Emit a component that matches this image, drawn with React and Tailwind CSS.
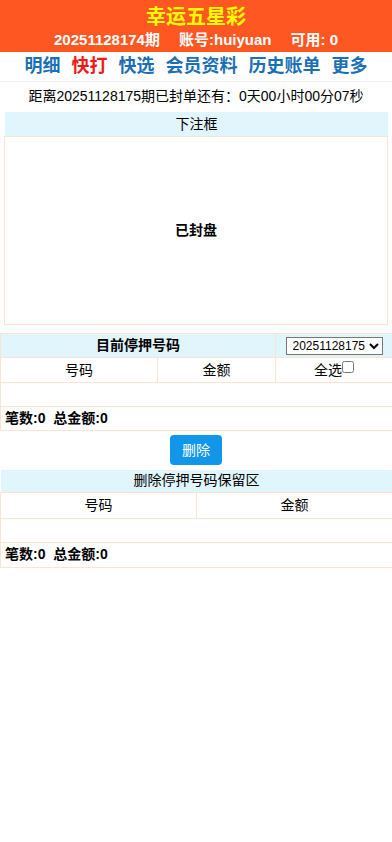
import { useState } from "react";

const font = { fontFamily: "'Liberation Sans', 'Noto Sans CJK SC', sans-serif" };
const td = "border border-[#fde3d3] p-0 text-[14px]";

export default function App() {
  const [all, setAll] = useState(false);
  const links = [
    { t: "明细", c: "text-[#1b6fb3]" },
    { t: "快打", c: "text-[#f01818]" },
    { t: "快选", c: "text-[#1b6fb3]" },
    { t: "会员资料", c: "text-[#1b6fb3]" },
    { t: "历史账单", c: "text-[#1b6fb3]" },
    { t: "更多", c: "text-[#1b6fb3]" },
  ];

  return (
    <div style={font} className="w-[392px] min-h-[842px] bg-white text-black">
      <div className="bg-[#ff5722] h-[52px] flex flex-col items-center pt-[3px]">
        <div className="text-[20px] font-bold text-[#ffff00] leading-[28px]">幸运五星彩</div>
        <div className="text-[15px] font-bold text-white leading-[18px] flex gap-[19px]">
          <span>20251128174期</span>
          <span>账号:huiyuan</span>
          <span>可用: 0</span>
        </div>
      </div>

      <div className="h-[30px] flex justify-center items-center gap-[11px] border-b border-[#eeeeee]">
        {links.map((l) => (
          <span key={l.t} className={`text-[18px] font-bold ${l.c}`}>
            {l.t}
          </span>
        ))}
      </div>

      <div className="h-[28px] flex items-center justify-center text-[14px]">
        距离20251128175期已封单还有：0天00小时00分07秒
      </div>

      <div className="mx-[4px] mt-[2px]">
        <div className="h-[24px] bg-[#e1f5fd] flex items-center justify-center text-[14px] ml-[1px]">下注框</div>
        <div className="border border-[#fde3d3] h-[189px] flex items-center justify-center text-[14px] font-bold">
          已封盘
        </div>
      </div>

      <table className="mt-[8px] w-[392px] border-collapse table-fixed">
        <colgroup>
          <col className="w-[157px]" />
          <col className="w-[118px]" />
          <col className="w-[117px]" />
        </colgroup>
        <tbody>
          <tr className="h-[24px] bg-[#e1f5fd]">
            <td colSpan={2} className={`${td} text-center font-bold`}>目前停押号码</td>
            <td className={`${td} text-center`}>
              <select className="h-[18px] text-[12px] border border-[#767676] bg-white pl-[2px] leading-none align-middle">
                <option>20251128175</option>
              </select>
            </td>
          </tr>
          <tr className="h-[25px]">
            <td className={`${td} text-center`}>号码</td>
            <td className={`${td} text-center`}>金额</td>
            <td className={`${td} text-center`}>
              全选
              <input
                type="checkbox"
                checked={all}
                onChange={() => setAll(!all)}
                className="w-[12px] h-[12px] m-0 align-top mt-[1px]"
              />
            </td>
          </tr>
          <tr className="h-[24px]">
            <td colSpan={3} className={td}></td>
          </tr>
          <tr className="h-[24px]">
            <td colSpan={3} className={`${td} font-bold px-[4px]`}>笔数:0&nbsp;&nbsp;总金额:0</td>
          </tr>
        </tbody>
      </table>

      <div className="flex justify-center pt-[4px] pb-[5px]">
        <button className="w-[52px] h-[30px] rounded-[4px] bg-[#1296ea] text-white text-[14px]">删除</button>
      </div>

      <table className="w-[392px] border-collapse table-fixed">
        <colgroup>
          <col className="w-[196px]" />
          <col className="w-[196px]" />
        </colgroup>
        <tbody>
          <tr className="h-[22px] bg-[#e1f5fd]">
            <td colSpan={2} className="p-0 text-[14px] text-center">删除停押号码保留区</td>
          </tr>
          <tr className="h-[26px]">
            <td className={`${td} text-center`}>号码</td>
            <td className={`${td} text-center`}>金额</td>
          </tr>
          <tr className="h-[24px]">
            <td colSpan={2} className={td}></td>
          </tr>
          <tr className="h-[25px]">
            <td colSpan={2} className={`${td} font-bold px-[4px]`}>笔数:0&nbsp;&nbsp;总金额:0</td>
          </tr>
        </tbody>
      </table>
    </div>
  );
}
